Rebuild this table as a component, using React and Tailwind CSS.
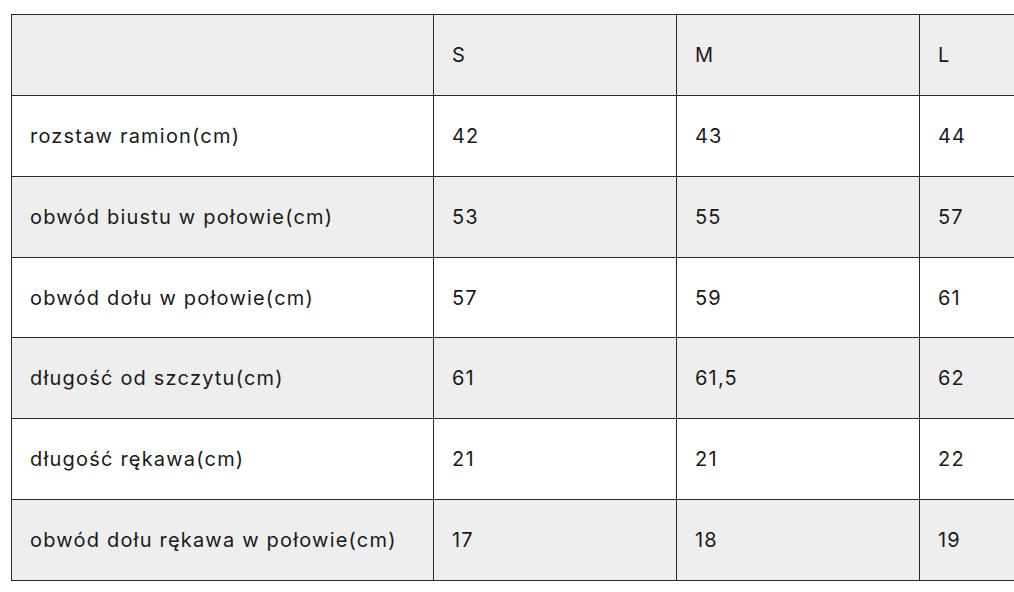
import React from 'react';

const rows = [
  ['rozstaw ramion(cm)', '42', '43', '44'],
  ['obwód biustu w połowie(cm)', '53', '55', '57'],
  ['obwód dołu w połowie(cm)', '57', '59', '61'],
  ['długość od szczytu(cm)', '61', '61,5', '62'],
  ['długość rękawa(cm)', '21', '21', '22'],
  ['obwód dołu rękawa w połowie(cm)', '17', '18', '19'],
];

const App = () => {
  return (
    <div className="w-[1014px] h-[592px] overflow-hidden bg-white pt-[14px] pl-[11px]" style={{ fontFamily: 'Inter, "Open Sans", sans-serif' }}>
      <table className="border-collapse table-fixed w-[1151px] text-[20px] text-[#1a1a1a] tracking-[0.06em]">
        <colgroup>
          <col className="w-[422px]" />
          <col className="w-[243px]" />
          <col className="w-[243px]" />
          <col className="w-[243px]" />
        </colgroup>
        <thead>
          <tr className="bg-[#eeeeee] h-[81px]">
            <th className="border border-[#2a2a2a]"></th>
            <th className="border border-[#2a2a2a] text-left font-normal pl-[18px]">S</th>
            <th className="border border-[#2a2a2a] text-left font-normal pl-[18px]">M</th>
            <th className="border border-[#2a2a2a] text-left font-normal pl-[18px]">L</th>
          </tr>
        </thead>
        <tbody>
          {rows.map((r, i) => (
            <tr key={i} className={`${i % 2 === 0 ? 'bg-white' : 'bg-[#eeeeee]'} ${i === 2 ? 'h-[80px]' : 'h-[81px]'}`}>
              {r.map((c, j) => (
                <td key={j} className="border border-[#2a2a2a] pl-[18px]">{c}</td>
              ))}
            </tr>
          ))}
        </tbody>
      </table>
    </div>
  );
};

export default App;
